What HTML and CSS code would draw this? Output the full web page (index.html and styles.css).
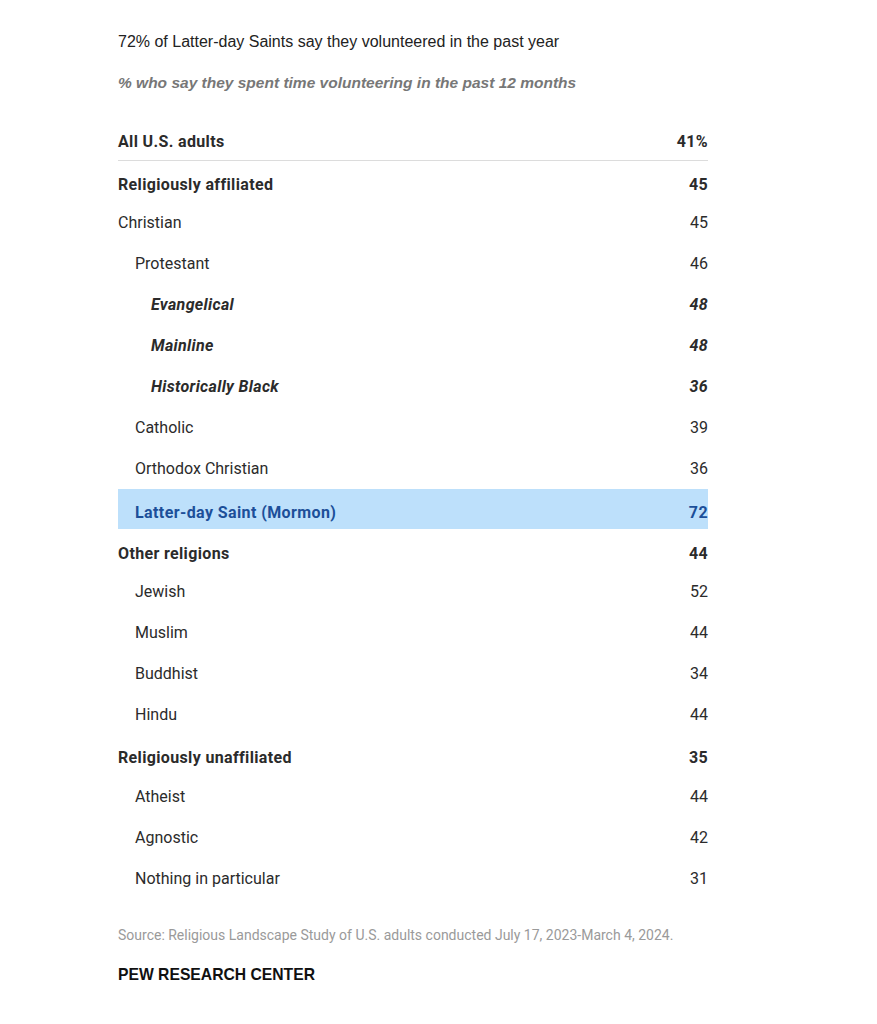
FILE: index.html
```html
<!DOCTYPE html>
<html>
<head>
<meta charset="utf-8">
<link rel="stylesheet" href="styles.css">
</head>
<body>
<div class="chart">
  <h1 class="title">72% of Latter-day Saints say they volunteered in the past year</h1>
  <p class="subtitle">% who say they spent time volunteering in the past 12 months</p>
  <div class="table">
    <div class="row total"><span>All U.S. adults</span><span>41%</span></div>
    <div class="row cat first"><span>Religiously affiliated</span><span>45</span></div>
    <div class="row"><span>Christian</span><span>45</span></div>
    <div class="row l2"><span>Protestant</span><span>46</span></div>
    <div class="row l3 em"><span>Evangelical</span><span>48</span></div>
    <div class="row l3 em"><span>Mainline</span><span>48</span></div>
    <div class="row l3 em"><span>Historically Black</span><span>36</span></div>
    <div class="row l2"><span>Catholic</span><span>39</span></div>
    <div class="row l2"><span>Orthodox Christian</span><span>36</span></div>
    <div class="row l2 hl"><span>Latter-day Saint (Mormon)</span><span>72</span></div>
    <div class="row cat"><span>Other religions</span><span>44</span></div>
    <div class="row l2"><span>Jewish</span><span>52</span></div>
    <div class="row l2"><span>Muslim</span><span>44</span></div>
    <div class="row l2"><span>Buddhist</span><span>34</span></div>
    <div class="row l2"><span>Hindu</span><span>44</span></div>
    <div class="row cat tall"><span>Religiously unaffiliated</span><span>35</span></div>
    <div class="row l2"><span>Atheist</span><span>44</span></div>
    <div class="row l2"><span>Agnostic</span><span>42</span></div>
    <div class="row l2"><span>Nothing in particular</span><span>31</span></div>
  </div>
  <p class="source">Source: Religious Landscape Study of U.S. adults conducted July 17, 2023-March 4, 2024.</p>
  <p class="brand">PEW RESEARCH CENTER</p>
</div>
</body>
</html>
```
FILE: styles.css
```css
html, body {
  margin: 0;
  padding: 0;
  background: #fff;
}
.chart {
  width: 590px;
  margin-left: 118px;
  padding-top: 32px;
}
.title {
  margin: 0;
  font-family: "Liberation Sans", Arial, sans-serif;
  font-weight: normal;
  font-size: 16px;
  line-height: 20px;
  color: #222;
}
.subtitle {
  margin: 21px 0 0 0;
  font-family: "Liberation Sans", Arial, sans-serif;
  font-weight: bold;
  font-style: italic;
  font-size: 15.5px;
  line-height: 20px;
  color: #777;
}
.table {
  margin-top: 30px;
  font-family: Roboto, "Noto Sans", sans-serif;
  font-size: 16px;
  color: #2b2b2b;
}
.row {
  display: flex;
  justify-content: space-between;
  align-items: center;
  height: 41px;
  box-sizing: border-box;
}
.row.total {
  height: 37px;
  font-weight: bold;
  letter-spacing: 0.35px;
  border-bottom: 1px solid #dcdcdc;
  box-sizing: content-box;
}
.row.cat {
  font-weight: bold;
  letter-spacing: 0.35px;
  height: 42px;
  padding-top: 6px;
}
.row.cat.first {
  height: 41px;
  padding-top: 5px;
}
.row.cat.tall {
  height: 41px;
  padding-top: 4px;
}
.row.l2 span:first-child { padding-left: 17px; }
.row.l3 span:first-child { padding-left: 33px; }
.row.em {
  font-weight: bold;
  font-style: italic;
  letter-spacing: 0.35px;
}
.row.hl {
  background: #bde0fb;
  color: #1c4f99;
  font-weight: bold;
  letter-spacing: 0.4px;
  height: 40px;
  padding-top: 6px;
}
.source {
  margin: 27px 0 0 0;
  font-family: Roboto, "Noto Sans", sans-serif;
  font-size: 14px;
  line-height: 18px;
  color: #9a9a9a;
}
.brand {
  margin: 22px 0 0 0;
  font-family: "Liberation Sans", Arial, sans-serif;
  font-weight: bold;
  font-size: 15.7px;
  line-height: 18px;
  color: #111;
}
```
